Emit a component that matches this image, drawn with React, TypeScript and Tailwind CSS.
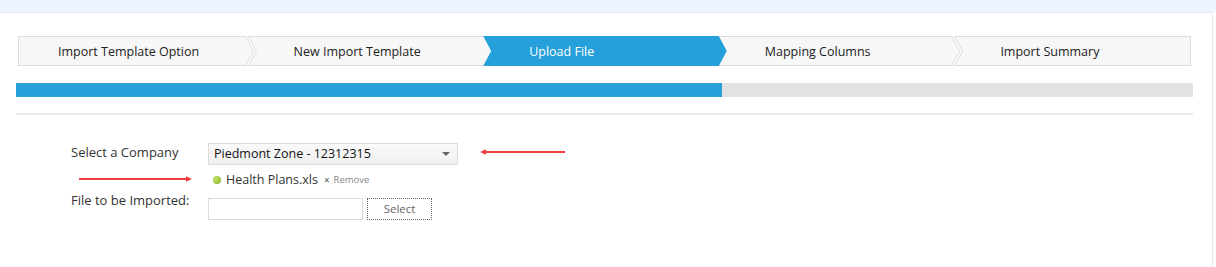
import React from 'react';

const steps = ['Import Template Option', 'New Import Template', 'Upload File', 'Mapping Columns', 'Import Summary'];
const activeIndex = 2;

function Chevron() {
  return (
    <svg className="absolute -left-[3px] -top-px z-20" width="14" height="30" viewBox="0 0 14 30">
      <polyline points="2,0 10,15 2,30" fill="none" stroke="#dedede" strokeWidth="3.5" />
      <polyline points="2,0 10,15 2,30" fill="none" stroke="#ffffff" strokeWidth="1.5" />
    </svg>
  );
}

function RedArrow({ width, dir }: { width: number; dir: 'left' | 'right' }) {
  const w = width;
  return (
    <svg width={w + 4} height="14" viewBox={`0 0 ${w + 4} 14`} className="block">
      <defs>
        <filter id={`sh-${dir}`} x="-10%" y="-100%" width="120%" height="300%">
          <feGaussianBlur stdDeviation="1.6" />
        </filter>
      </defs>
      <line x1="4" y1="8.5" x2={w} y2="8.5" stroke="#9a9a9a" strokeWidth="3" filter={`url(#sh-${dir})`} opacity="0.7" />
      {dir === 'left' ? (
        <>
          <line x1="5" y1="5" x2={w} y2="5" stroke="#ee3b3b" strokeWidth="2" />
          <polygon points="1,5 7,2.2 7,7.8" fill="#ee3b3b" />
        </>
      ) : (
        <>
          <line x1="1" y1="5" x2={w - 2} y2="5" stroke="#ee3b3b" strokeWidth="2" />
          <polygon points={`${w + 2},5 ${w - 4},2.2 ${w - 4},7.8`} fill="#ee3b3b" />
        </>
      )}
    </svg>
  );
}

export default function App() {
  return (
    <div className="w-[1216px] h-[267px] bg-white overflow-hidden font-['Open_Sans','Noto_Sans',sans-serif] text-[#333]">
      <div className="h-[12px] bg-[#edf4fd]" />
      <div className="w-[1213px] h-[255px] border-t border-r border-[#e3e9f0] pt-[23px] pl-[16px]">
        {/* wizard */}
        <div className="ml-[2px] w-[1173px] h-[30px] flex border border-[#dcdcdc] bg-[#f7f7f7] text-[12.5px] text-[#222]">
          {steps.map((s, i) => {
            const active = i === activeIndex;
            return (
              <div key={s} className={`relative flex-1 flex items-center pt-[2px] ${i === 0 ? 'pl-[39px]' : 'pl-[46px]'}`}>
                {active && (
                  <span className="absolute -top-px -bottom-px left-0 -right-[8px] z-10 bg-[#26a0da] [clip-path:polygon(0_0,calc(100%-8px)_0,100%_50%,calc(100%-8px)_100%,0_100%,8px_50%)]" />
                )}
                {i > 0 && i !== activeIndex && i !== activeIndex + 1 && <Chevron />}
                <span className={`relative z-20 ${active ? 'text-white' : ''}`}>{s}</span>
              </div>
            );
          })}
        </div>

        {/* progress */}
        <div className="mt-[17px] w-[1177px] h-[14px] flex bg-[#e2e2e2]">
          <div className="w-[706px] bg-[#26a0da]" />
        </div>

        <div className="mt-[16px] w-[1177px] h-[2px] bg-[#ebebeb]" />

        {/* form */}
        <div className="mt-[28px] pl-[55px] text-[13px]">
          <div className="flex items-center h-[22px]">
            <span className="w-[137px] -mt-[2px]">Select a Company</span>
            <div className="w-[250px] h-[22px] border border-[#dcdcdc] bg-gradient-to-b from-[#fafafa] to-[#f0f0f0] flex items-center justify-between pl-[5px] pr-[7px] text-[12.5px] text-[#111]">
              <span>Piedmont Zone - 12312315</span>
              <span className="w-0 h-0 border-l-[4px] border-r-[4px] border-t-[4px] border-l-transparent border-r-transparent border-t-[#666]" />
            </div>
            <div className="ml-[21px] -mt-[1px]">
              <RedArrow width={86} dir="left" />
            </div>
          </div>

          <div className="relative flex items-center h-[22px] mt-[4px]">
            <div className="absolute left-[7px] top-[5px]">
              <RedArrow width={112} dir="right" />
            </div>
            <div className="ml-[142px] flex items-center">
              <span className="w-[8px] h-[8px] rounded-full bg-[radial-gradient(circle_at_35%_35%,#c6e06a,#7fb022)]" />
              <span className="ml-[5px] text-[12.5px] text-[#333]">Health Plans.xls</span>
              <span className="ml-[6px] text-[10px] text-[#555]">×</span>
              <span className="ml-[4px] text-[9.5px] text-[#888]">Remove</span>
            </div>
          </div>

          <div className="flex items-start">
            <span className="w-[137px] leading-[18px]">File to be Imported:</span>
            <div className="mt-[7px] flex">
              <div className="w-[155px] h-[22px] border border-[#dcdcdc] bg-white" />
              <div className="ml-[4px] w-[65px] h-[22px] border border-dotted border-[#666] flex items-center justify-center text-[11.5px] text-[#666]">
                Select
              </div>
            </div>
          </div>
        </div>
      </div>
    </div>
  );
}
